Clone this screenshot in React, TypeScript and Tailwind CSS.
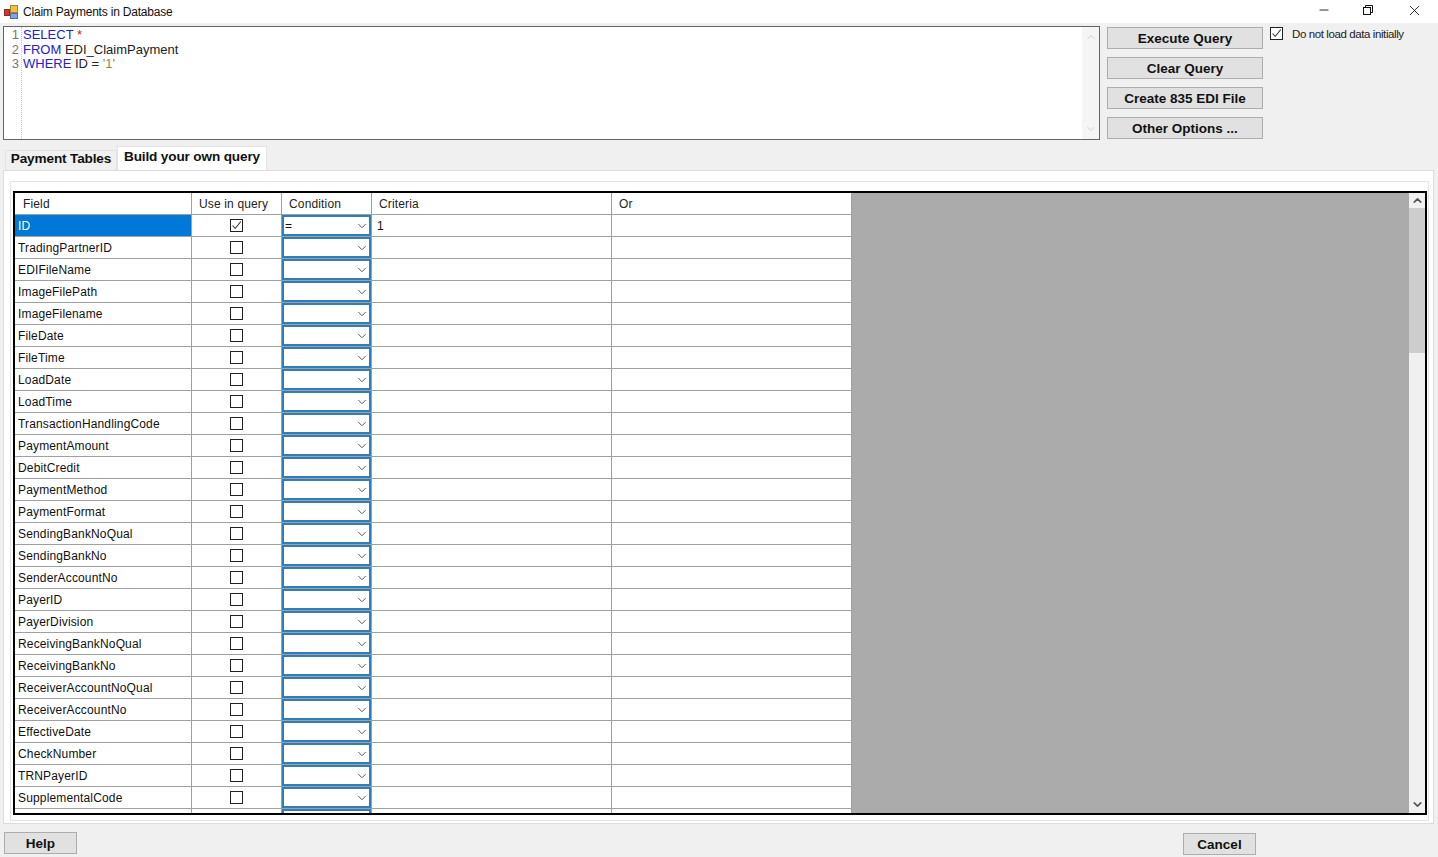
import { ChevronDown, ChevronUp, Minus, X } from 'lucide-react';

const fields = [
  'ID',
  'TradingPartnerID',
  'EDIFileName',
  'ImageFilePath',
  'ImageFilename',
  'FileDate',
  'FileTime',
  'LoadDate',
  'LoadTime',
  'TransactionHandlingCode',
  'PaymentAmount',
  'DebitCredit',
  'PaymentMethod',
  'PaymentFormat',
  'SendingBankNoQual',
  'SendingBankNo',
  'SenderAccountNo',
  'PayerID',
  'PayerDivision',
  'ReceivingBankNoQual',
  'ReceivingBankNo',
  'ReceiverAccountNoQual',
  'ReceiverAccountNo',
  'EffectiveDate',
  'CheckNumber',
  'TRNPayerID',
  'SupplementalCode',
  '',
];

function AppIcon() {
  return (
    <svg width="16" height="16" viewBox="0 0 16 16">
      <rect x="1.5" y="5.5" width="5" height="6" fill="#d8362a" stroke="#8a2a20" />
      <rect x="7.5" y="1.5" width="7" height="7" fill="#f2c23e" stroke="#a8852a" />
      <rect x="7.5" y="9.5" width="7" height="5" fill="#7fa6dc" stroke="#4d6fa5" />
    </svg>
  );
}

function RestoreIcon() {
  return (
    <svg width="12" height="12" viewBox="0 0 12 12" fill="none" stroke="#111" strokeWidth="1">
      <rect x="1.5" y="3.5" width="7" height="7" />
      <path d="M3.5 3.5V1.5H10.5V8.5H8.5" />
    </svg>
  );
}

function WinButton({ children }: { children: string }) {
  return (
    <button className="w-[156px] h-[22px] pt-[2px] bg-[#e1e1e1] border border-[#adadad] text-[13.5px] font-bold text-[#111] leading-none">
      {children}
    </button>
  );
}

function CheckBox({ checked }: { checked: boolean }) {
  return (
    <span className="w-[13px] h-[13px] shrink-0 border border-[#222] bg-white flex items-center justify-center">
      {checked && (
        <svg width="11" height="11" viewBox="0 0 11 11" fill="none" stroke="#333" strokeWidth="1.1">
          <path d="M1.5 5.5L4.2 8.5L9.8 1.5" />
        </svg>
      )}
    </span>
  );
}

function Row({ name, index }: { name: string; index: number }) {
  const first = index === 0;
  return (
    <div className="flex h-[22px] shrink-0 text-[12px] tracking-[0.15px] text-[#111]">
      <div
        className={`w-[177px] border-r border-b border-[#a0a0a0] pl-[3px] flex items-center ${
          first ? 'bg-[#0078d7] text-white' : ''
        }`}
      >
        {name}
      </div>
      <div className="w-[90px] border-r border-b border-[#a0a0a0] flex items-center justify-center pr-[1px]">
        <CheckBox checked={first} />
      </div>
      <div className="w-[90px] border-r border-b border-[#a0a0a0] flex">
        <div className="w-[89px] h-[21px] border-2 border-[#2f7db9] flex items-center justify-between pl-[1px]">
          <span>{first ? '=' : ''}</span>
          <ChevronDown size={14} strokeWidth={1.5} className="text-[#444]" />
        </div>
      </div>
      <div className="w-[240px] border-r border-b border-[#a0a0a0] pl-[5px] flex items-center">
        {first ? '1' : ''}
      </div>
      <div className="w-[240px] border-r border-b border-[#a0a0a0]" />
    </div>
  );
}

export default function App() {
  return (
    <div
      className="w-[1438px] h-[857px] bg-[#f0f0f0] flex flex-col overflow-hidden"
      style={{ fontFamily: '"Liberation Sans", Arial, sans-serif' }}
    >
      {/* Title bar */}
      <div className="h-[23px] bg-white flex items-center shrink-0">
        <div className="ml-[3px] w-[16px] h-[16px]">
          <AppIcon />
        </div>
        <span className="ml-[4px] text-[12px] tracking-[-0.2px] text-[#111]">Claim Payments in Database</span>
        <div className="ml-auto flex items-center mb-[3px]">
          <Minus size={14} strokeWidth={1.5} className="text-[#111] mr-[31px]" />
          <RestoreIcon />
          <X size={17} strokeWidth={1.2} className="text-[#111] ml-[32px] mr-[15px]" />
        </div>
      </div>

      {/* Query editor and buttons */}
      <div className="flex h-[114px] mt-[3px] ml-[3px] shrink-0">
        <div className="w-[1097px] h-[114px] bg-white border border-[#646464] flex">
          <div className="w-[18px] border-r border-dotted border-[#c8c8c8] text-right pr-[2px] pt-[1px] text-[13px] leading-[14.5px] text-[#777]">
            <div>1</div>
            <div>2</div>
            <div>3</div>
          </div>
          <div className="flex-1 pl-[1px] pt-[1px] text-[13px] leading-[14.5px] text-[#222]">
            <div>
              <span className="text-[#2222cc]">SELECT</span> <span className="text-[#cc2222]">*</span>
            </div>
            <div>
              <span className="text-[#2222cc]">FROM</span> EDI_ClaimPayment
            </div>
            <div>
              <span className="text-[#2222cc]">WHERE</span> ID = <span className="text-[#8a8a5a]">'1'</span>
            </div>
          </div>
          <div className="w-[17px] bg-[#f5f5f5] flex flex-col justify-between items-center py-[4px] text-[#d0d0d0]">
            <ChevronUp size={12} />
            <ChevronDown size={12} />
          </div>
        </div>
        <div className="ml-[7px] mt-[1px] flex flex-col gap-[8px]">
          <WinButton>Execute Query</WinButton>
          <WinButton>Clear Query</WinButton>
          <WinButton>Create 835 EDI File</WinButton>
          <WinButton>Other Options ...</WinButton>
        </div>
        <div className="ml-[7px] mt-[1px] flex items-start">
          <CheckBox checked />
          <span className="ml-[9px] mt-[1px] text-[11.5px] leading-[13px] tracking-[-0.4px] text-[#222]">
            Do not load data initially
          </span>
        </div>
      </div>

      {/* Tabs */}
      <div className="flex items-end h-[24px] mt-[6px] ml-[5px] shrink-0">
        <div className="w-[112px] h-[20px] pb-[2px] bg-[#f0f0f0] border border-b-0 border-[#e3e3e3] text-[13.6px] tracking-[-0.15px] font-bold text-[#111] flex items-center justify-center">
          Payment Tables
        </div>
        <div className="w-[150px] h-[24px] bg-white border border-b-0 border-[#e3e3e3] text-[13.6px] tracking-[-0.15px] font-bold text-[#111] flex items-center justify-center pb-[2px]">
          Build your own query
        </div>
      </div>

      {/* Tab page */}
      <div className="w-[1431px] h-[654px] ml-[3px] bg-white border border-[#dcdcdc] shrink-0 pl-[6px] pr-[4px] pt-[10px]">
        <div className="h-[640px] border border-[#e3e3e3] pl-[2px] pt-[9px]">
          <div className="w-[1414px] h-[624px] border-2 border-black flex overflow-hidden">
            <div className="w-[837px] flex flex-col overflow-hidden shrink-0">
              <div className="flex h-[22px] shrink-0 text-[12px] tracking-[0.15px] text-[#222]">
                <div className="w-[177px] border-r border-b border-[#a0a0a0] pl-[8px] flex items-center">Field</div>
                <div className="w-[90px] border-r border-b border-[#a0a0a0] pl-[7px] flex items-center">Use in query</div>
                <div className="w-[90px] border-r border-b border-[#a0a0a0] pl-[7px] flex items-center">Condition</div>
                <div className="w-[240px] border-r border-b border-[#a0a0a0] pl-[7px] flex items-center">Criteria</div>
                <div className="w-[240px] border-r border-b border-[#a0a0a0] pl-[7px] flex items-center">Or</div>
              </div>
              {fields.map((name, i) => (
                <Row key={i} name={name} index={i} />
              ))}
            </div>
            <div className="flex-1 bg-[#ababab]" />
            <div className="w-[16px] bg-[#f0f0f0] flex flex-col items-center shrink-0">
              <div className="h-[15px] flex items-center justify-center text-[#555]">
                <ChevronUp size={13} strokeWidth={3} />
              </div>
              <div className="w-full h-[145px] bg-[#cdcdcd]" />
              <div className="mt-auto h-[17px] flex items-center justify-center text-[#555]">
                <ChevronDown size={13} strokeWidth={3} />
              </div>
            </div>
          </div>
        </div>
      </div>

      {/* Footer */}
      <div className="flex items-start mt-[8px] ml-[4px]">
        <button className="w-[73px] h-[22px] pt-[2px] bg-[#e1e1e1] border border-[#adadad] text-[13.5px] font-bold text-[#111] leading-none">
          Help
        </button>
        <button className="w-[73px] h-[22px] pt-[2px] ml-[1106px] mt-[1px] bg-[#e1e1e1] border border-[#adadad] text-[13.5px] font-bold text-[#111] leading-none">
          Cancel
        </button>
      </div>
    </div>
  );
}
